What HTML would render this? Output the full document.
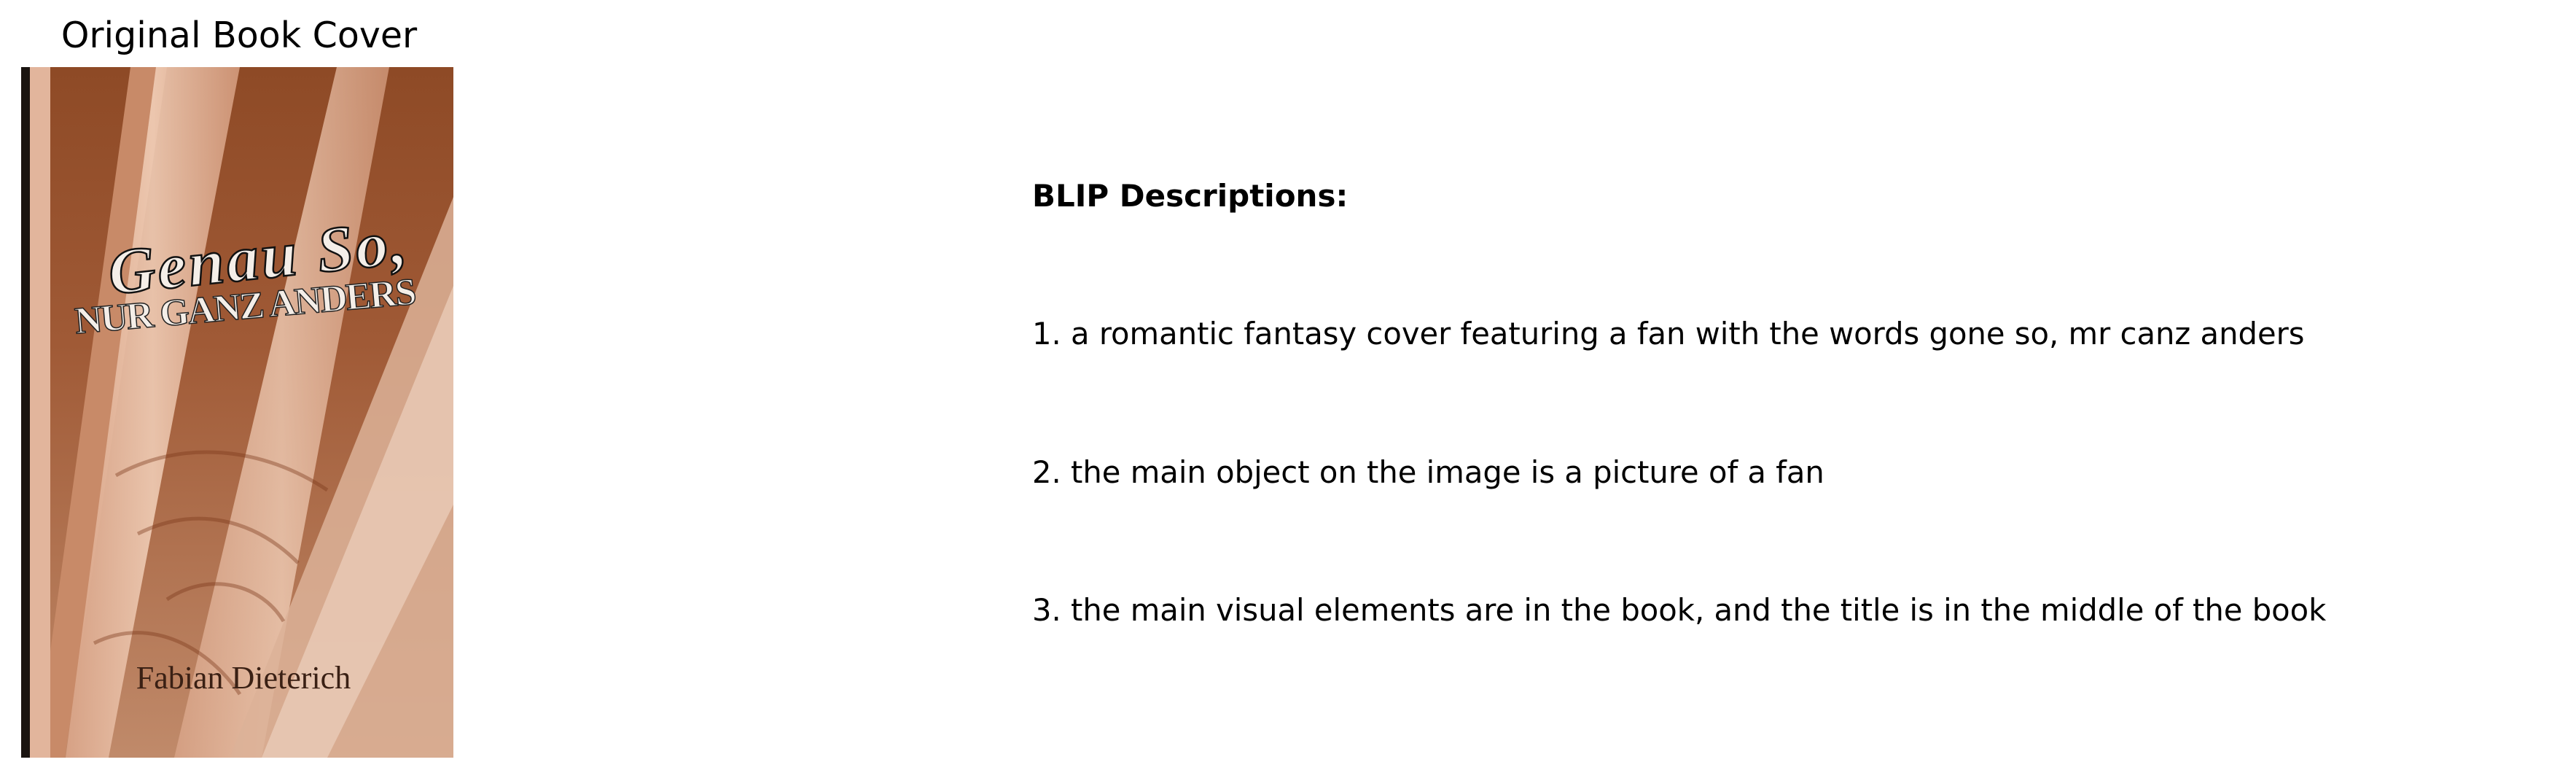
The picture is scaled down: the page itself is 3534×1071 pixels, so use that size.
<!DOCTYPE html>
<html><head><meta charset="utf-8"><style>
html,body{margin:0;padding:0;background:#fff;width:3534px;height:1071px;overflow:hidden;position:relative;font-family:"DejaVu Sans","Liberation Sans",sans-serif;color:#000}
.t{position:absolute;white-space:nowrap;line-height:1}
</style></head><body>
<div class="t" style="left:0;width:656px;text-align:center;top:24px;font-size:49px">Original Book Cover</div>
<svg style="position:absolute;left:29px;top:92px" width="593" height="947" viewBox="0 0 593 947">
<defs>
<linearGradient id="bg" x1="0" y1="0" x2="0" y2="1"><stop offset="0" stop-color="#8e4a26"/><stop offset="0.4" stop-color="#a05a36"/><stop offset="1" stop-color="#c08a6a"/></linearGradient>
<linearGradient id="ls" x1="0" y1="0" x2="1" y2="0"><stop offset="0" stop-color="#d9a488"/><stop offset="0.5" stop-color="#f0cdb6"/><stop offset="1" stop-color="#d39a7c"/></linearGradient>
</defs>
<rect width="593" height="947" fill="url(#bg)"/>
<polygon points="150,0 200,0 60,947 20,947" fill="#c88a68"/>
<polygon points="185,0 300,0 120,947 61,947" fill="url(#ls)" opacity="0.9"/>
<polygon points="433,0 505,0 330,947 210,947" fill="url(#ls)" opacity="0.8"/>
<polygon points="593,178 593,471 593,947 286,947" fill="#dcb198" opacity="0.85"/>
<polygon points="593,300 593,600 420,947 330,947" fill="#ecd0bd" opacity="0.7"/>
<rect x="12" y="0" width="28" height="947" fill="#e2b59c"/>
<rect x="0" y="0" width="12" height="947" fill="#1a1410"/>
<g fill="none" stroke="#7a3618" stroke-width="5" opacity="0.4">
<path d="M130,560 C220,510 330,520 420,580 M160,640 C240,600 320,620 380,680 M200,730 C260,690 330,710 360,760 M100,790 C180,750 260,800 300,860"/>
</g>
<text x="325" y="290" font-family="Liberation Serif,serif" font-style="italic" font-weight="bold" font-size="88" fill="#f4eee8" stroke="#111" stroke-width="2.5" text-anchor="middle" textLength="410" transform="rotate(-6 325 270)">Genau So,</text>
<text x="308" y="345" font-family="Liberation Serif,serif" font-weight="bold" font-size="52" fill="#f4eee8" stroke="#222" stroke-width="1.5" text-anchor="middle" textLength="470" transform="rotate(-5 308 330)">NUR GANZ ANDERS</text>
<text x="305" y="852" font-family="Liberation Serif,serif" font-size="44" fill="#3a2014" text-anchor="middle">Fabian Dieterich</text>
</svg>
<div class="t" style="left:1416px;top:248px;font-size:42px;font-weight:bold">BLIP Descriptions:</div>
<div class="t" style="left:1416px;top:437px;font-size:41.7px">1. a romantic fantasy cover featuring a fan with the words gone so, mr canz anders</div>
<div class="t" style="left:1416px;top:627px;font-size:41.7px">2. the main object on the image is a picture of a fan</div>
<div class="t" style="left:1416px;top:816px;font-size:41.7px">3. the main visual elements are in the book, and the title is in the middle of the book</div>
</body></html>
